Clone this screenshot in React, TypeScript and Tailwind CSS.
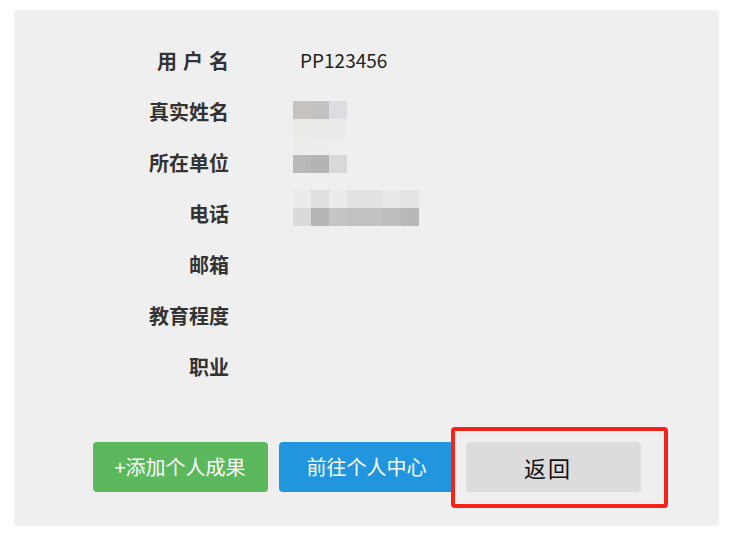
import React from 'react'

const font = { fontFamily: '"Noto Sans CJK SC", "Noto Sans", sans-serif' }

const fields: { label: string; value?: string }[] = [
  { label: '用 户 名', value: 'PP123456' },
  { label: '真实姓名' },
  { label: '所在单位' },
  { label: '电话' },
  { label: '邮箱' },
  { label: '教育程度' },
  { label: '职业' },
]

// redaction mosaic, rows of 18px cells (top offset relative to the field list)
const mosaic: { top: number; cells: string[] }[] = [
  { top: 66, cells: ['#c6c2c0', '#c2c2c2', '#dcdde0'] },
  { top: 84, cells: ['#eaeae8', '#ebebe9', '#ebebeb'] },
  { top: 102, cells: ['#ededec', '#ededed', '#eeeeee'] },
  { top: 120, cells: ['#b9b9b9', '#b4b4b4', '#d9d9db'] },
  { top: 155, cells: ['#ebebeb', '#e0e0e0', '#ebebeb', '#e1e2e2', '#e2e2e2', '#e7e8e8', '#e3e4e4'] },
  { top: 173, cells: ['#dadada', '#b5b5b5', '#c5c5c5', '#c1c2c2', '#c2c2c2', '#bdbdbd', '#b8b8b8'] },
]

export default function App() {
  return (
    <div className="w-[732px] h-[538px] bg-white pt-[10px]" style={font}>
      <div className="ml-[14px] w-[705px] h-[516px] rounded-[4px] bg-[#efefef] pt-[25px]">
        <div className="relative">
          {fields.map((f) => (
            <div key={f.label} className="flex h-[51px] items-center">
              <div className="w-[215px] text-right text-[20px] font-bold text-[#333] whitespace-pre [word-spacing:1.5px]">
                {f.label}
              </div>
              <div className="ml-[71px] text-[19px] text-[#222]">{f.value}</div>
            </div>
          ))}
          {mosaic.map((r) => (
            <div
              key={r.top}
              className="absolute left-[279px] flex"
              style={{ top: r.top }}
            >
              {r.cells.map((c, i) => (
                <div key={i} className="h-[18px] w-[18px]" style={{ backgroundColor: c }} />
              ))}
            </div>
          ))}
        </div>

        <div className="mt-[50px] flex justify-center gap-[11.5px]">
          <button className="h-[50px] w-[175px] rounded-[4px] bg-[#5cb85c] text-[20px] text-white">
            +添加个人成果
          </button>
          <button className="h-[50px] w-[175px] rounded-[4px] bg-[#2196de] text-[20px] text-white">
            前往个人中心
          </button>
          <div className="relative">
            <button className="h-[50px] w-[175px] rounded-[4px] bg-[#dcdcdc] pr-[10px] text-[22px] tracking-[2px] text-[#111]">
              返回
            </button>
            <div className="pointer-events-none absolute left-[-15px] top-[-15px] h-[81px] w-[217px] rounded-[4px] border-[4px] border-[#f5231a]" />
          </div>
        </div>
      </div>
    </div>
  )
}
